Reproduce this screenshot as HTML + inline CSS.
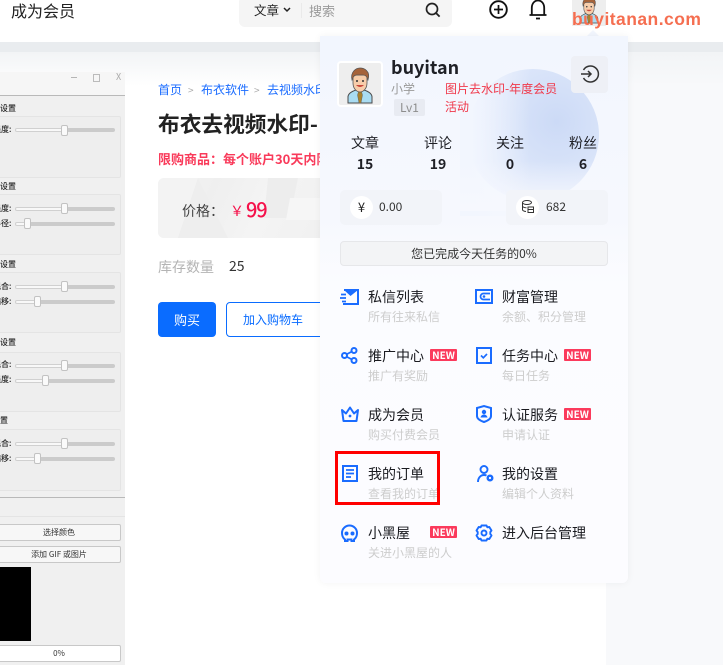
<!DOCTYPE html>
<html><head><meta charset="utf-8">
<style>
html,body{margin:0;padding:0}
body{width:723px;height:665px;overflow:hidden;position:relative;background:#f8f9fb;font-family:"Noto Sans CJK SC","Liberation Sans",sans-serif;color:#1f2026}
.a{position:absolute;white-space:nowrap}
.t{position:absolute;white-space:nowrap;line-height:20px;height:20px}
.lb{font-size:14px;color:#1a1b20}
.sb{font-size:12px;color:#cdcdcd}
.new{position:absolute;width:27px;height:12px;background:#fb3a5c;border-radius:1px;color:#fff;font:bold 10px/12px "Noto Sans CJK SC",sans-serif;text-align:center}
.g{position:absolute;left:-3px;width:124px;background:#eeeeee;border:1px solid #e4e4e4;box-sizing:border-box;border-radius:2px}
.tr{position:absolute;left:15px;width:100px;height:4px;background:#cbcbcb;border-radius:2px}
.tr i{position:absolute;left:0;top:0;height:4px;background:#f8f8f8;box-shadow:inset 0 0 0 1px #d0d0d0;border-radius:2px}
.h{position:absolute;width:7px;height:11px;background:#fafafa;border:1px solid #c2c2c2;border-radius:2px;box-sizing:border-box}
.gt{position:absolute;font-size:8px;line-height:12px;color:#222;font-weight:500;white-space:nowrap}
.btn{position:absolute;left:-3px;width:124px;height:17px;box-sizing:border-box;border:1px solid #c8c8c8;background:#f7f7f7;border-radius:2px;text-align:center;font-size:8px;line-height:15px;color:#333}
.st{position:absolute;text-align:center;width:50px;font-size:14px;line-height:20px}
svg{position:absolute;overflow:visible}
</style></head><body>

<!-- page bands -->
<div class="a" style="left:0;top:42px;width:723px;height:10px;background:#e9ecef"></div>
<div class="a" style="left:0;top:52px;width:723px;height:34px;background:linear-gradient(#f2f4f6,#f8f9fb)"></div>
<div class="a" style="left:0;top:52px;width:606px;height:613px;background:linear-gradient(#f2f4f6,#fff 34px)"></div>

<!-- header -->
<div class="a" style="left:0;top:0;width:723px;height:42px;background:#fff"></div>
<div class="t" style="left:11px;top:0;font-size:16px;color:#222">成为会员</div>
<div class="a" style="left:239px;top:-4px;width:213px;height:31px;background:#f5f5f5;border-radius:6px"></div>
<div class="t" style="left:254px;top:0;font-size:12.500px;color:#222">文章</div>
<svg style="left:283px;top:7px" width="8" height="6"><path d="M1 1l3 3 3-3" fill="none" stroke="#222" stroke-width="1.500"/></svg>
<div class="a" style="left:301px;top:3px;width:1px;height:15px;background:#eaeaea"></div>
<div class="t" style="left:309px;top:1px;font-size:13px;color:#9a9a9a">搜索</div>
<svg style="left:425px;top:2px" width="16" height="16" viewBox="0 0 16 16"><circle cx="7" cy="7" r="5.500" fill="none" stroke="#222" stroke-width="1.700"/><path d="M11 11l3.600 3.600" stroke="#222" stroke-width="1.800"/></svg>
<svg style="left:489px;top:0" width="20" height="20" viewBox="0 0 20 20"><circle cx="9.500" cy="9.500" r="8.300" fill="none" stroke="#111" stroke-width="1.900"/><path d="M9.500 5v9M5 9.500h9" stroke="#111" stroke-width="1.700"/></svg>
<svg style="left:528px;top:0" width="20" height="20" viewBox="0 0 20 20"><path d="M1.500 15h17M3.800 15V8C3.800 4 6 .5 10 .5S16.200 4 16.200 8v7" fill="none" stroke="#111" stroke-width="1.800"/><path d="M8 18.500h4" stroke="#111" stroke-width="1.800"/></svg>
<div class="a" style="left:572px;top:-8px;width:34px;height:34px;background:#eeeeee;overflow:hidden">
<svg style="left:0;top:0" width="34" height="34" viewBox="0 0 46 46"><path d="M11 42v-6c0-4 5-6 8-7h8c3 1 8 3 8 7v6z" fill="#a9dcf2" stroke="#4a4a4a"/><path d="M22 29h2l1.500 5-1.500 8h-2l-1.500-8z" fill="#a8812f" stroke="#555" stroke-width=".4"/><path d="M16 22c0 6 4 9 7 9s7-3 7-9V14H16z" fill="#f7cdaa" stroke="#555" stroke-width=".8"/><path d="M15 19c-2-8 4-12 8-12s11 3 8 12c-1-4-3-5-5-5h-6c-3 0-4 2-5 5z" fill="#a5633a" stroke="#555" stroke-width=".7"/><path d="M19 24q4 4 8 0z" fill="#c9473a"/><circle cx="20" cy="20" r="1" fill="#333"/><circle cx="26" cy="20" r="1" fill="#333"/></svg>
</div>
<div class="a" style="left:587px;top:30px;width:0;height:0;border:6px solid transparent;border-top:0;border-bottom-color:#f2f6fe"></div>

<!-- left app screenshot -->
<div class="a" style="left:0;top:72px;width:125px;height:593px;background:#f0f0f0;overflow:hidden">
 <div class="a" style="left:0;top:0;width:125px;height:23px;background:#f6f6f6;border-bottom:1px solid #b9b9b9"></div>
 <div class="a" style="left:71px;top:5px;width:6px;height:1px;background:#b5b5b5"></div>
 <div class="a" style="left:93px;top:2px;width:5px;height:6px;border:1px solid #bbb"></div>
 <div class="a" style="left:116px;top:-2px;font-size:9px;line-height:14px;color:#aaa">X</div>

 <div class="gt" style="left:-8px;top:31px">预设置</div>
 <div class="g" style="top:44px;height:62px"></div>
 <div class="gt" style="left:-7px;top:52px">强度:</div>
 <div class="tr" style="top:56px"><i style="width:49px"></i></div><div class="h" style="left:61px;top:53px"></div>

 <div class="gt" style="left:-8px;top:109px">光设置</div>
 <div class="g" style="top:122px;height:61px"></div>
 <div class="gt" style="left:-7px;top:131px">强度:</div>
 <div class="tr" style="top:135px"><i style="width:49px"></i></div><div class="h" style="left:61px;top:131px"></div>
 <div class="gt" style="left:-7px;top:146px">半径:</div>
 <div class="tr" style="top:150px"><i style="width:13px"></i></div><div class="h" style="left:24px;top:146px"></div>

 <div class="gt" style="left:-8px;top:187px">光设置</div>
 <div class="g" style="top:200px;height:61px"></div>
 <div class="gt" style="left:-7px;top:209px">混合:</div>
 <div class="tr" style="top:213px"><i style="width:49px"></i></div><div class="h" style="left:61px;top:209px"></div>
 <div class="gt" style="left:-7px;top:224px">偏移:</div>
 <div class="tr" style="top:228px"><i style="width:23px"></i></div><div class="h" style="left:34px;top:224px"></div>

 <div class="gt" style="left:-8px;top:265px">光设置</div>
 <div class="g" style="top:280px;height:60px"></div>
 <div class="gt" style="left:-7px;top:287px">混合:</div>
 <div class="tr" style="top:292px"><i style="width:49px"></i></div><div class="h" style="left:61px;top:288px"></div>
 <div class="gt" style="left:-7px;top:302px">强度:</div>
 <div class="tr" style="top:307px"><i style="width:30px"></i></div><div class="h" style="left:42px;top:303px"></div>

 <div class="gt" style="left:-8px;top:343px">设置</div>
 <div class="g" style="top:357px;height:62px"></div>
 <div class="gt" style="left:-7px;top:366px">混合:</div>
 <div class="tr" style="top:370px"><i style="width:49px"></i></div><div class="h" style="left:61px;top:366px"></div>
 <div class="gt" style="left:-7px;top:381px">偏移:</div>
 <div class="tr" style="top:385px"><i style="width:23px"></i></div><div class="h" style="left:34px;top:381px"></div>

 <div class="a" style="left:0;top:425px;width:125px;height:1px;background:#b9b9b9"></div>
 <div class="a" style="left:0;top:444px;width:125px;height:1px;background:#e4e4e4"></div>
 <div class="btn" style="top:452px">选择颜色</div>
 <div class="btn" style="top:474px">添加 GIF 或图片</div>
 <div class="a" style="left:0;top:495px;width:31px;height:74px;background:#000"></div>
 <div class="btn" style="top:573px;background:#fff">0%</div>
</div>

<!-- product -->
<div class="t" style="left:158px;top:80px;font-size:12px;color:#1a6cff">首页</div>
<div class="t" style="left:188px;top:80px;font-size:10px;color:#aaa">&gt;</div>
<div class="t" style="left:201px;top:80px;font-size:12px;color:#1a6cff">布衣软件</div>
<div class="t" style="left:254px;top:80px;font-size:10px;color:#aaa">&gt;</div>
<div class="t" style="left:267px;top:80px;font-size:12px;color:#1a6cff">去视频水印</div>
<div class="a" style="left:158px;top:108px;font-size:21.700px;line-height:32px;font-weight:bold;color:#222">布衣去视频水印-</div>
<div class="t" style="left:158px;top:149px;font-size:13px;font-weight:bold;color:#f93a5a">限购商品：每个账户30天内限</div>
<div class="a" style="left:158px;top:178px;width:170px;height:60px;border-radius:6px;overflow:hidden;background:linear-gradient(115deg,#f5f5f5,#efefef 30%,#f4f4f4 60%,#f0f0f0)">
 <svg style="left:0;top:0" width="170" height="60"><path d="M0 0h40L20 60H0z" fill="#f3f3f3"/><path d="M40 0l30 60H20z" fill="#eeeeee"/><path d="M110 0h30l-8 40h-26z" fill="#ededed"/><path d="M132 20h38v22h-42z" fill="#f6f6f6"/></svg>
</div>
<div class="t" style="left:182px;top:201px;font-size:14px;color:#444">价格：</div>
<div class="t" style="left:230px;top:201px;font-size:14px;color:#f5114a">￥</div>
<div class="t" style="left:246px;top:199px;font-size:20px;font-weight:500;letter-spacing:-1.200px;color:#f5114a">99</div>
<div class="t" style="left:158px;top:257px;font-size:14px;color:#b4b4b4">库存数量</div>
<div class="t" style="left:229px;top:256px;font-size:14px;color:#333">25</div>
<div class="a" style="left:158px;top:302px;width:58px;height:35px;background:#0a6cff;border-radius:4px;color:#fff;font-size:13px;line-height:35px;text-align:center">购买</div>
<div class="a" style="left:226px;top:302px;width:100px;height:35px;box-sizing:border-box;border:1px solid #0a6cff;border-radius:4px;background:#fff;color:#0a6cff;font-size:12px;line-height:33px;padding-left:16px">加入购物车</div>

<!-- dropdown panel -->
<div class="a" style="left:320px;top:36px;width:308px;height:547px;border-radius:0 0 6px 6px;background:linear-gradient(#f2f6fe,#f6f8fe 180px,#fbfcff 250px,#fcfcff);box-shadow:0 0 8px rgba(0,0,0,.05);overflow:hidden">
 <div class="a" style="left:147px;top:33px;width:132px;height:132px;border-radius:50%;background:radial-gradient(circle at 68% 40%,#ccdaf6,#d8e3f9 40%,#e2eafb 70%,#e8eefc)"></div>
 <div class="a" style="left:140px;top:20px;width:70px;height:160px;background:linear-gradient(to right,#f2f6fe 15%,rgba(242,246,254,0))"></div>
 <div class="a" style="left:140px;top:125px;width:150px;height:50px;background:linear-gradient(rgba(246,248,254,0),#f6f8fe)"></div>
</div>

<div class="a" style="left:337px;top:61px;width:46px;height:46px;box-sizing:border-box;border:2px solid #fff;border-radius:4px;background:#eeeeee;overflow:hidden">
<svg style="left:-2px;top:-2px" width="46" height="46" viewBox="0 0 46 46"><path d="M11 42v-6c0-4 5-6 8-7h8c3 1 8 3 8 7v6z" fill="#a9dcf2" stroke="#4a4a4a"/><path d="M22 29h2l1.500 5-1.500 8h-2l-1.500-8z" fill="#a8812f" stroke="#555" stroke-width=".4"/><path d="M16 22c0 6 4 9 7 9s7-3 7-9V14H16z" fill="#f7cdaa" stroke="#555" stroke-width=".8"/><path d="M15 19c-2-8 4-12 8-12s11 3 8 12c-1-4-3-5-5-5h-6c-3 0-4 2-5 5z" fill="#a5633a" stroke="#555" stroke-width=".7"/><path d="M19 24q4 4 8 0z" fill="#c9473a"/><circle cx="20" cy="20" r="1" fill="#333"/><circle cx="26" cy="20" r="1" fill="#333"/></svg>
</div>
<div class="t" style="left:391px;top:57px;font-size:18px;font-weight:bold;color:#1f2026">buyitan</div>
<div class="t" style="left:391px;top:79px;font-size:12px;color:#999">小学</div>
<div class="a" style="left:394px;top:99px;width:31px;height:17px;border-radius:2px;background:#e8ebf2;color:#8d8d8d;font-size:12px;line-height:17px;text-align:center">Lv1</div>
<div class="t" style="left:445px;top:79px;font-size:12px;color:#f0384a">图片去水印-年度会员</div>
<div class="t" style="left:445px;top:97px;font-size:12px;color:#f0384a">活动</div>
<div class="a" style="left:571px;top:56px;width:37px;height:37px;border-radius:4px;background:#eef0f6"></div>
<svg style="left:580px;top:65px" width="18" height="18" viewBox="0 0 18 18"><path d="M3.500 5A8 8 0 1 1 3.500 13" fill="none" stroke="#333" stroke-width="1.500"/><path d="M1 9h10M8 6l3 3-3 3" fill="none" stroke="#333" stroke-width="1.500"/></svg>

<div class="st" style="left:340px;top:133px">文章</div><div class="st" style="left:340px;top:154px;font-weight:bold">15</div>
<div class="st" style="left:413px;top:133px">评论</div><div class="st" style="left:413px;top:154px;font-weight:bold">19</div>
<div class="st" style="left:485px;top:133px">关注</div><div class="st" style="left:485px;top:154px;font-weight:bold">0</div>
<div class="st" style="left:558px;top:133px">粉丝</div><div class="st" style="left:558px;top:154px;font-weight:bold">6</div>

<div class="a" style="left:340px;top:190px;width:102px;height:35px;border-radius:5px;background:#f2f4f9"></div>
<div class="a" style="left:350px;top:196px;width:23px;height:23px;border-radius:50%;background:#fff;font-size:13px;line-height:22px;text-align:center;color:#222">¥</div>
<div class="t" style="left:379px;top:197px;font-size:12px;color:#333">0.00</div>
<div class="a" style="left:506px;top:190px;width:102px;height:35px;border-radius:5px;background:#f2f4f9"></div>
<div class="a" style="left:516px;top:196px;width:23px;height:23px;border-radius:50%;background:#fff"></div>
<svg style="left:521px;top:200px" width="14" height="14" viewBox="0 0 14 14"><ellipse cx="6" cy="2.500" rx="4.500" ry="2" fill="none" stroke="#333"/><path d="M1.500 2.500v7c0 1 1.500 1.800 3.500 2M7 7h5.500v5.500H7zM7 9.500h5.500M1.500 6c0 1 2 1.800 4 1.800" fill="none" stroke="#333"/></svg>
<div class="t" style="left:546px;top:197px;font-size:12px;color:#333">682</div>

<div class="a" style="left:340px;top:241px;width:268px;height:25px;box-sizing:border-box;border:1px solid #e6e7ea;border-radius:4px;background:#f3f4f6;font-size:12px;line-height:24px;text-align:center;color:#333">您已完成今天任务的0%</div>

<!-- menu -->
<div class="t lb" style="left:368px;top:287px">私信列表</div><div class="t sb" style="left:368px;top:307px">所有往来私信</div>
<div class="t lb" style="left:502px;top:287px">财富管理</div><div class="t sb" style="left:502px;top:307px">余额、积分管理</div>
<div class="t lb" style="left:368px;top:346px">推广中心</div><div class="t sb" style="left:368px;top:366px">推广有奖励</div><div class="new" style="left:430px;top:349px">NEW</div>
<div class="t lb" style="left:502px;top:346px">任务中心</div><div class="t sb" style="left:502px;top:366px">每日任务</div><div class="new" style="left:564px;top:349px">NEW</div>
<div class="t lb" style="left:368px;top:405px">成为会员</div><div class="t sb" style="left:368px;top:425px">购买付费会员</div>
<div class="t lb" style="left:502px;top:405px">认证服务</div><div class="t sb" style="left:502px;top:425px">申请认证</div><div class="new" style="left:564px;top:408px">NEW</div>
<div class="t lb" style="left:368px;top:464px">我的订单</div><div class="t sb" style="left:368px;top:484px">查看我的订单</div>
<div class="t lb" style="left:502px;top:464px">我的设置</div><div class="t sb" style="left:502px;top:484px">编辑个人资料</div>
<div class="t lb" style="left:368px;top:523px">小黑屋</div><div class="t sb" style="left:368px;top:543px">关进小黑屋的人</div><div class="new" style="left:430px;top:526px">NEW</div>
<div class="t lb" style="left:502px;top:523px">进入后台管理</div>

<!-- icons -->
<svg style="left:340px;top:289px" width="19" height="16" viewBox="0 0 19 16"><path d="M4 1h14v14H3" fill="none" stroke="#1a6cff" stroke-width="2"/><path d="M4 1l6.500 6L18 1z" fill="#1a6cff"/><path d="M1 5.500h5M0 9h6M2 12.500h4" stroke="#1a6cff" stroke-width="1.700"/></svg>
<svg style="left:475px;top:289px" width="18" height="15" viewBox="0 0 18 15"><path d="M1 1h16v13H1z" fill="none" stroke="#1a6cff" stroke-width="2"/><path d="M15 4.500H8.500a3 3 0 0 0 0 6H15" fill="none" stroke="#1a6cff" stroke-width="1.700"/><circle cx="9" cy="7.500" r="1.300" fill="#1a6cff"/></svg>
<svg style="left:341px;top:347px" width="17" height="17" viewBox="0 0 17 17"><circle cx="3.500" cy="8.500" r="2.500" fill="none" stroke="#1a6cff" stroke-width="2"/><circle cx="13" cy="3.500" r="2.500" fill="none" stroke="#1a6cff" stroke-width="2"/><circle cx="13" cy="13.500" r="2.500" fill="none" stroke="#1a6cff" stroke-width="2"/><path d="M5.700 7.300l5-2.700M5.700 9.700l5 2.700" stroke="#1a6cff" stroke-width="1.700"/></svg>
<svg style="left:476px;top:347px" width="16" height="17" viewBox="0 0 16 17"><path d="M1 1h14v15H1z" fill="none" stroke="#1a6cff" stroke-width="2"/><path d="M5 8.500l2.300 2.300L11 7" fill="none" stroke="#1a6cff" stroke-width="1.700"/></svg>
<svg style="left:341px;top:406px" width="18" height="16" viewBox="0 0 18 16"><path d="M1 4l4 3.500L9 1.500l4 6L17 4l-1.500 11h-13z" fill="none" stroke="#1a6cff" stroke-width="2" stroke-linejoin="round"/><circle cx="9" cy="10" r="1.400" fill="#1a6cff"/></svg>
<svg style="left:476px;top:405px" width="16" height="18" viewBox="0 0 16 18"><path d="M1 3l7-2 7 2v8c0 3-4 5-7 6-3-1-7-3-7-6z" fill="none" stroke="#1a6cff" stroke-width="2"/><circle cx="8" cy="7" r="2.200" fill="#1a6cff"/><path d="M4.500 12.500c.5-2 2-3 3.500-3s3 1 3.500 3z" fill="#1a6cff"/></svg>
<svg style="left:342px;top:465px" width="16" height="17" viewBox="0 0 16 17"><path d="M1 1h14v15H1z" fill="none" stroke="#1a6cff" stroke-width="2"/><path d="M4 5h8M4 8.500h8M4 12h5" stroke="#1a6cff" stroke-width="1.700"/></svg>
<svg style="left:477px;top:465px" width="17" height="18" viewBox="0 0 17 18"><circle cx="7" cy="4.500" r="3.500" fill="none" stroke="#1a6cff" stroke-width="1.900"/><path d="M1 17c0-4 2.500-7 6-7 1 0 2 .3 2.500.6" fill="none" stroke="#1a6cff" stroke-width="1.900"/><circle cx="13" cy="13" r="2.300" fill="#fff" stroke="#1a6cff" stroke-width="2.400"/></svg>
<svg style="left:341px;top:524px" width="17" height="18" viewBox="0 0 17 18"><path d="M4 15.500C2 14 1 11.500 1 9a7.500 7.500 0 0 1 15 0c0 2.500-1 5-3 6.500v1.500h-2.500v-1.500h-4V17H4z" fill="none" stroke="#1a6cff" stroke-width="2"/><circle cx="5.500" cy="9.500" r="2" fill="#1a6cff"/><circle cx="11.500" cy="9.500" r="2" fill="#1a6cff"/></svg>
<svg style="left:476px;top:524px" width="16" height="18" viewBox="0 0 16 18"><path d="M5.500 1.500h5l.8 1.800 2-.3L15.500 6.500l-1.200 1.500v2l1.200 1.500-2.200 3.500-2-.3-.8 1.800h-5l-.8-1.800-2 .3L.5 11.500 1.700 10V8L.5 6.500 2.700 3l2 .3z" fill="none" stroke="#1a6cff" stroke-width="1.900" stroke-linejoin="round"/><circle cx="8" cy="9" r="2.500" fill="none" stroke="#1a6cff" stroke-width="1.900"/></svg>

<!-- red box -->
<div class="a" style="left:335px;top:451px;width:105px;height:54px;box-sizing:border-box;border:3px solid #f00"></div>

<!-- watermark -->
<div class="a" style="left:572px;top:8px;font:bold 17.500px/22px 'Liberation Sans',sans-serif;letter-spacing:.45px;color:#f56e50">buyitanan.com</div>
</body></html>
